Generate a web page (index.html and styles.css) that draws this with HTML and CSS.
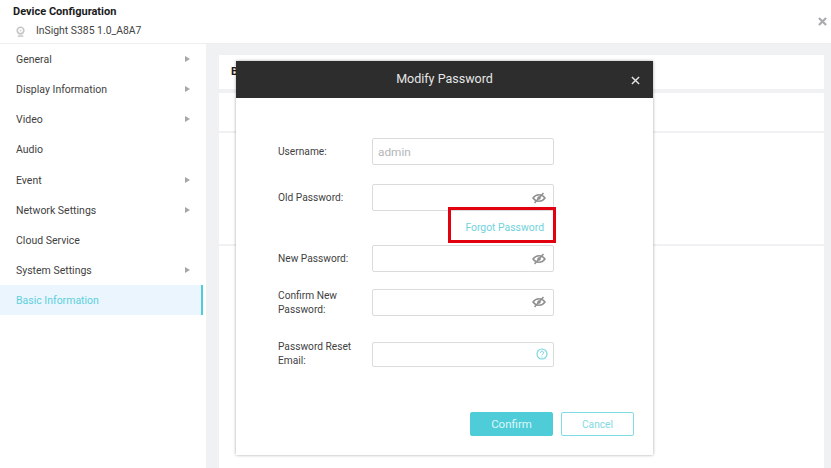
FILE: index.html
```html
<!DOCTYPE html>
<html lang="en">
<head>
<meta charset="utf-8">
<title>Device Configuration</title>
<link rel="stylesheet" href="styles.css">
</head>
<body>
<div class="page">
  <header class="top">
    <div class="top-title">Device Configuration</div>
    <div class="top-device">
      <svg class="cam" viewBox="0 0 12 12" width="11" height="11"><circle cx="6" cy="5" r="3.600" fill="none" stroke="#c4c6c6" stroke-width="1.800"/><circle cx="6" cy="5" r="1.200" fill="#d8dada"/><path d="M3 11h6" stroke="#c4c6c6" stroke-width="1.600"/></svg>
      <span>InSight S385 1.0_A8A7</span>
    </div>
    <svg class="top-close" viewBox="0 0 10 10" width="9" height="9"><path d="M1 1l8 8M9 1l-8 8" stroke="#a9abad" stroke-width="2.400"/></svg>
  </header>
  <div class="main">
    <nav class="side">
      <div class="item">General<i class="arr"></i></div>
      <div class="item">Display Information<i class="arr"></i></div>
      <div class="item">Video<i class="arr"></i></div>
      <div class="item">Audio</div>
      <div class="item">Event<i class="arr"></i></div>
      <div class="item">Network Settings<i class="arr"></i></div>
      <div class="item">Cloud Service</div>
      <div class="item">System Settings<i class="arr"></i></div>
      <div class="item active">Basic Information</div>
    </nav>
    <section class="content">
      <div class="card tab"><b>Basic</b></div>
      <div class="card body">
        <div class="row r1"></div>
        <div class="row r2"></div>
      </div>
    </section>
  </div>
  <div class="modal">
    <div class="m-head">
      <span>Modify Password</span>
      <svg class="m-close" viewBox="0 0 10 10" width="9" height="9"><path d="M1 1l8 8M9 1l-8 8" stroke="#e4e4e4" stroke-width="1.600"/></svg>
    </div>
    <div class="m-body">
      <div class="field f-user"><label>Username:</label><div class="input"><span class="ph">admin</span></div></div>
      <div class="field f-old"><label>Old Password:</label><div class="input"><svg class="eye" viewBox="0 0 14 12" width="14" height="12"><use href="#eye"/></svg></div></div>
      <div class="forgot-row"><a class="forgot">Forgot Password</a></div>
      <div class="field f-new"><label>New Password:</label><div class="input"><svg class="eye" viewBox="0 0 14 12" width="14" height="12"><use href="#eye"/></svg></div></div>
      <div class="field f-conf"><label>Confirm New Password:</label><div class="input"><svg class="eye" viewBox="0 0 14 12" width="14" height="12"><use href="#eye"/></svg></div></div>
      <div class="field f-mail"><label>Password Reset Email:</label><div class="input short"><svg class="help" viewBox="0 0 12 12" width="12" height="12"><circle cx="6" cy="6" r="5" fill="none" stroke="#6fd3dc" stroke-width="1.100"/><path d="M4.400 4.800a1.600 1.600 0 1 1 2.500 1.300c-.6.400-.9.700-.9 1.300" fill="none" stroke="#6fd3dc" stroke-width="1"/><circle cx="6" cy="9" r=".6" fill="#6fd3dc"/></svg></div></div>
      <div class="actions"><button class="btn primary">Confirm</button><button class="btn ghost">Cancel</button></div>
    </div>
  </div>
</div>
<svg class="defs" width="0" height="0"><defs><g id="eye"><path d="M1 6c1.600-2.200 3.600-3.200 6-3.200S11.400 3.800 13 6c-1.600 2.200-3.600 3.200-6 3.200S2.600 8.200 1 6z" fill="none" stroke="#8f9191" stroke-width="1.500"/><circle cx="7" cy="6" r="1.800" fill="#8f9191"/><path d="M2.500 11L11.500 1" stroke="#8f9191" stroke-width="1.500"/></g></defs></svg>
</body>
</html>
```
FILE: styles.css
```css
* { box-sizing: border-box; }
html, body { margin: 0; height: 100%; }
body { font-family: Roboto, "Noto Sans", "Liberation Sans", sans-serif; color: #333; background: #fff; overflow: hidden; }
.defs { position: absolute; }
.page { position: relative; width: 831px; height: 468px; display: flex; flex-direction: column; overflow: hidden; }
.top { position: relative; height: 44px; padding: 5px 0 0 13px; border-bottom: 1px solid #eceef0; background: #fff; flex: none; }
.top-title { font-size: 11px; font-weight: 700; color: #1b1b1b; line-height: 14px; }
.top-device { display: flex; align-items: center; gap: 10px; margin-top: 5px; padding-left: 2px; font-size: 10.400px; line-height: 14px; color: #444; }
.top-close { position: absolute; right: 4px; top: 17px; }
.main { flex: 1; display: flex; background: #f0f1f3; min-height: 0; }
.side { width: 206px; background: #fff; flex: none; }
.item { position: relative; height: 30.150px; width: 203px; padding-left: 16px; font-size: 10.500px; line-height: 32px; color: #3f3f3f; }
.arr { position: absolute; left: 185px; top: 12px; border-left: 5px solid #a6a8a8; border-top: 3px solid transparent; border-bottom: 3px solid transparent; }
.active { background: #eaf5fe; color: #5dd0dc; border-right: 2px solid #4fcdd8; }
.content { flex: 1; padding: 11px 7px 0 13px; display: flex; flex-direction: column; gap: 4px; min-width: 0; }
.card { background: #fff; }
.tab { height: 34px; padding: 10px 0 0 12px; font-size: 11px; color: #1b1b1b; line-height: 14px; }
.body { flex: 1; }
.r1 { height: 40px; border-bottom: 2px solid #f0f1f3; }
.r2 { height: 113px; border-bottom: 2px solid #f0f1f3; }
.modal { position: absolute; left: 236px; top: 61px; width: 417px; height: 394px; background: #fff; box-shadow: 0 0 3px rgba(0,0,0,.35); display: flex; flex-direction: column; }
.m-head { position: relative; height: 37px; background: #2d2d2d; color: #e6e6e6; font-size: 12.500px; line-height: 36px; text-align: center; flex: none; }
.m-close { position: absolute; right: 13px; top: 15px; }
.m-body { padding: 40px 0 0 42px; flex: 1; display: flex; flex-direction: column; }
.field { display: flex; align-items: center; }
.field label { width: 94px; font-size: 10.200px; line-height: 14px; color: #3f3f3f; padding-right: 14px; }
.f-conf label { transform: translateY(1px); }
.input { position: relative; width: 182px; height: 27px; border: 1px solid #d9dbdc; border-radius: 2px; background: #fff; display: flex; align-items: center; justify-content: flex-end; padding: 0 4px 0 5px; }
.short { height: 25px; }
.ph { margin-right: auto; font-size: 11.800px; color: #b4b6b8; }
.eye { margin-right: 3px; }
.help { margin-right: 1px; }
.f-old { margin-top: 19px; }
.forgot-row { height: 34px; width: 278px; display: flex; justify-content: flex-end; align-items: flex-start; }
.forgot { position: relative; margin-top: -4px; width: 108px; height: 36px; padding: 4px 9px 0 0; border: 3px solid #e3000f; font-size: 10.400px; color: #6fd3dc; display: flex; align-items: center; justify-content: flex-end; }
.f-conf { margin-top: 16px; }
.f-mail { margin-top: 24px; }
.actions { display: flex; gap: 8px; margin: 44px 0 0 192px; }
.btn { width: 83px; height: 24px; border-radius: 2px; font-family: inherit; font-size: 11.500px; padding: 0; }
.primary { background: #4ecdd8; border: 1px solid #4ecdd8; color: #dff6f8; }
.ghost { width: 73px; background: #fff; border: 1px solid #7fdce4; color: #7fd9e1; font-size: 10.200px; }
```
